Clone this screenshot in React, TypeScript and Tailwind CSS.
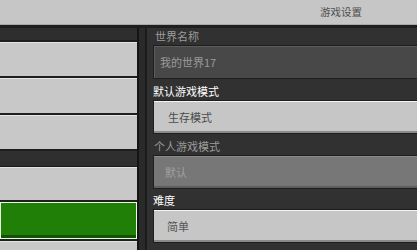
import React from "react";

const font = { fontFamily: '"Noto Sans CJK SC", "Noto Sans", sans-serif' };

function LeftButton({ green = false, h = "h-[36px]" }: { green?: boolean; h?: string }) {
  if (green) {
    return (
      <div className={`${h} shrink-0 bg-[#1f7f07] border border-[#e8ffe0] shadow-[inset_0_-3px_0_#125205]`} />
    );
  }
  return (
    <div className={`${h} shrink-0 bg-[#c8c8c8] border-b-2 border-[#1e1e1e] shadow-[inset_0_1px_0_#e4e4e4]`} />
  );
}

export default function App() {
  return (
    <div className="w-[417px] h-[250px] overflow-hidden bg-[#313131] flex flex-col" style={font}>
      <div className="h-[25px] shrink-0 bg-[#c6c6c6] flex items-center border-b border-[#a8a8a8]">
        <span className="ml-[320px] text-[10.5px] leading-none text-[#4e4e4e]">游戏设置</span>
      </div>
      <div className="flex flex-1 border-t-[3px] border-[#1e1e1e] min-h-0">
        <div className="w-[137px] shrink-0 flex flex-col pt-[12px] bg-[#2e2e2e] overflow-hidden">
          <div className="border-t-2 border-[#1e1e1e]" />
          <LeftButton h="h-[36px]" />
          <LeftButton h="h-[37px]" />
          <LeftButton h="h-[36px]" />
          <div className="h-[16px] shrink-0 bg-[#2f2f2f] border-b border-[#1a1a1a]" />
          <LeftButton h="h-[35px]" />
          <LeftButton green h="h-[37px]" />
          <div className="h-[2px] shrink-0 bg-[#1e1e1e]" />
          <LeftButton h="h-[36px]" />
        </div>
        <div className="w-[2px] shrink-0 bg-[#141414]" />
        <div className="w-[6px] shrink-0 bg-[#2a2a2a]" />
        <div className="w-[2px] shrink-0 bg-[#1c1c1c]" />
        <div className="flex-1 min-w-0 overflow-hidden bg-[#313131] pl-[6px] flex flex-col">
          <div className="h-[17px] shrink-0 flex items-center pl-[2px] text-[11px] leading-none text-[#9c9c9c] whitespace-nowrap">
            世界名称
          </div>
          <div className="h-[34px] w-[300px] shrink-0 bg-[#484848] border border-[#1e1e1e] shadow-[inset_1px_1px_0_#5c5c5c] flex items-center pl-[6px] text-[11px] leading-none text-[#9a9a9a] whitespace-nowrap">
            我的世界17
          </div>
          <div className="h-[21px] shrink-0 flex items-center pt-[4px] text-[11px] leading-none text-white whitespace-nowrap">
            默认游戏模式
          </div>
          <div className="h-[34px] w-[300px] shrink-0 bg-[#c6c6c6] border border-[#1e1e1e] shadow-[inset_0_1px_0_#f4f4f4,inset_0_-2px_0_#8a8a8a] flex items-center pl-[14px] text-[11px] leading-none text-[#4c4c4c] whitespace-nowrap">
            生存模式
          </div>
          <div className="h-[21px] shrink-0 flex items-center pt-[3px] pl-[1px] text-[11px] leading-none text-[#9c9c9c] whitespace-nowrap">
            个人游戏模式
          </div>
          <div className="h-[34px] w-[300px] shrink-0 bg-[#777777] border border-[#1e1e1e] shadow-[inset_0_1px_0_#8a8a8a,inset_0_-2px_0_#5e5e5e] flex items-center pl-[11px] text-[11px] leading-none text-[#a0a0a0] whitespace-nowrap">
            默认
          </div>
          <div className="h-[20px] shrink-0 flex items-center pt-[2px] text-[11px] leading-none text-white whitespace-nowrap">
            难度
          </div>
          <div className="h-[34px] w-[300px] shrink-0 bg-[#c6c6c6] border border-[#1e1e1e] shadow-[inset_0_1px_0_#f4f4f4,inset_0_-2px_0_#8a8a8a] flex items-center pl-[13px] text-[11px] leading-none text-[#555555] whitespace-nowrap">
            简单
          </div>
        </div>
      </div>
    </div>
  );
}
